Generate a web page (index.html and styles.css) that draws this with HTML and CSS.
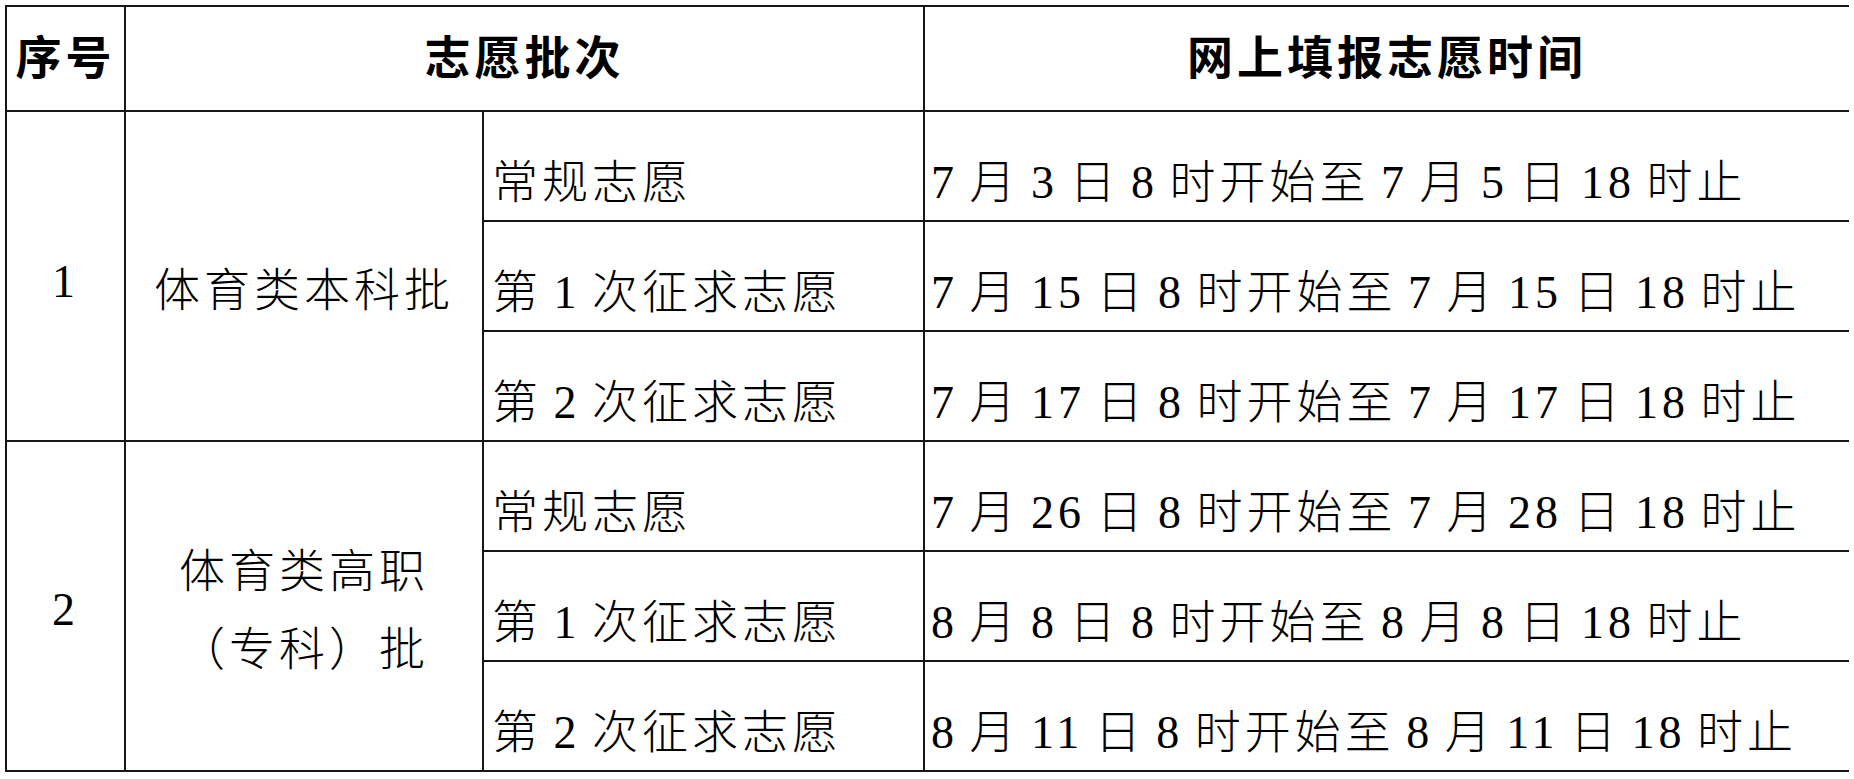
FILE: index.html
```html
<!DOCTYPE html>
<html lang="zh-CN">
<head>
<meta charset="utf-8">
<title>体育类志愿填报时间</title>
<link rel="stylesheet" href="styles.css">
</head>
<body>
<table class="schedule">
  <colgroup>
    <col class="col-no">
    <col class="col-batch">
    <col class="col-kind">
    <col class="col-time">
  </colgroup>
  <thead>
    <tr class="head-row">
      <th>序号</th>
      <th colspan="2">志愿批次</th>
      <th>网上填报志愿时间</th>
    </tr>
  </thead>
  <tbody>
    <tr class="row">
      <td rowspan="3" class="no group-a">1</td>
      <td rowspan="3" class="batch group-a">体育类本科批</td>
      <td class="kind">常规志愿</td>
      <td class="time">7 月 3 日 8 时开始至 7 月 5 日 18 时止</td>
    </tr>
    <tr class="row">
      <td class="kind">第 1 次征求志愿</td>
      <td class="time">7 月 15 日 8 时开始至 7 月 15 日 18 时止</td>
    </tr>
    <tr class="row">
      <td class="kind">第 2 次征求志愿</td>
      <td class="time">7 月 17 日 8 时开始至 7 月 17 日 18 时止</td>
    </tr>
    <tr class="row">
      <td rowspan="3" class="no group-b">2</td>
      <td rowspan="3" class="batch group-b two-line">体育类高职<br>（专科）批</td>
      <td class="kind">常规志愿</td>
      <td class="time">7 月 26 日 8 时开始至 7 月 28 日 18 时止</td>
    </tr>
    <tr class="row">
      <td class="kind">第 1 次征求志愿</td>
      <td class="time">8 月 8 日 8 时开始至 8 月 8 日 18 时止</td>
    </tr>
    <tr class="row">
      <td class="kind">第 2 次征求志愿</td>
      <td class="time">8 月 11 日 8 时开始至 8 月 11 日 18 时止</td>
    </tr>
  </tbody>
</table>
</body>
</html>
```

FILE: styles.css
```css
html, body {
  background: #ffffff;
}

body {
  margin: 5px;
  color: #000;
  font-family: "Liberation Serif", "Noto Sans CJK SC", serif;
}

.schedule {
  border-collapse: collapse;
  table-layout: fixed;
  width: 1844px;
  font-size: 46px;
  letter-spacing: 4px;
  word-spacing: -4px;
  font-weight: 300;
}

.col-no { width: 119px; }
.col-batch { width: 358px; }
.col-kind { width: 441px; }
.col-time { width: 926px; }

.schedule th,
.schedule td {
  border: 2px solid #161616;
  padding: 0;
  line-height: 56px;
  white-space: nowrap;
  overflow: hidden;
  vertical-align: middle;
}

.schedule .head-row {
  height: 105px;
}

.schedule .head-row th {
  font-weight: 700;
  text-align: center;
}

.schedule .row {
  height: 110px;
}

.schedule .kind,
.schedule .time {
  text-align: left;
  padding-top: 34px;
}

.schedule .kind {
  padding-left: 8px;
}

.schedule .time {
  padding-left: 6px;
}

.schedule .no,
.schedule .batch {
  text-align: center;
}

.schedule .group-a {
  padding-top: 30px;
}

.schedule .no.group-a {
  padding-top: 12px;
}

.schedule .group-b {
  padding-top: 8px;
}

.schedule .two-line {
  line-height: 78px;
  padding-top: 10px;
}
```
